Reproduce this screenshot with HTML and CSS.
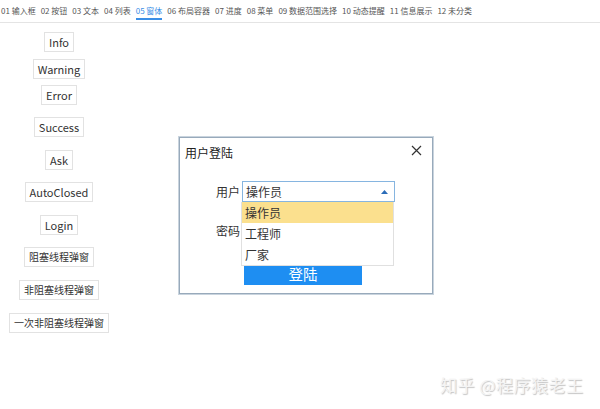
FILE: index.html
```html
<!DOCTYPE html>
<html>
  <head>
    <title>窗体</title>
    <meta charset='utf-8'>
    <link rel="stylesheet" href="styles.css">
  </head>
  <body>
    <div class='tabs'>
      <span class='tab'>01 输入框</span>
      <span class='tab'>02 按钮</span>
      <span class='tab'>03 文本</span>
      <span class='tab'>04 列表</span>
      <span class='tab active'>05 窗体</span>
      <span class='tab'>06 布局容器</span>
      <span class='tab'>07 进度</span>
      <span class='tab'>08 菜单</span>
      <span class='tab'>09 数据范围选择</span>
      <span class='tab'>10 动态提醒</span>
      <span class='tab'>11 信息展示</span>
      <span class='tab'>12 未分类</span>
    </div>

    <div class='buttons'>
      <button class='btn'>Info</button>
      <button class='btn'>Warning</button>
      <button class='btn'>Error</button>
      <button class='btn wide'>Success</button>
      <button class='btn wide'>Ask</button>
      <button class='btn wide'>AutoClosed</button>
      <button class='btn wide'>Login</button>
      <button class='btn wide cjk'>阻塞线程弹窗</button>
      <button class='btn wide cjk'>非阻塞线程弹窗</button>
      <button class='btn wide cjk'>一次非阻塞线程弹窗</button>
    </div>

    <!-- login window -->
    <div class='dialog'>
      <div class='dialog-title'>
        <span>用户登陆</span>
        <svg class='close' width='11' height='11' viewBox='0 0 11 11'>
          <path d='M1 1 L10 10 M10 1 L1 10' stroke='#333' stroke-width='1.2' fill='none'/>
        </svg>
      </div>
      <div class='form'>
        <div class='row'>
          <span class='label'>用户</span>
          <div class='combo'>
            <span>操作员</span>
            <svg width='7' height='4' viewBox='0 0 7 4'><path d='M0 4 L3.5 0 L7 4 Z' fill='#2b6cb8'/></svg>
          </div>
        </div>
        <div class='row'>
          <span class='label'>密码</span>
        </div>
        <button class='login'>登陆</button>
        <ul class='dropdown'>
          <li class='selected'>操作员</li>
          <li>工程师</li>
          <li>厂家</li>
        </ul>
      </div>
    </div>

    <div class='watermark'>知乎 @程序猿老王</div>
  </body>
</html>
```

FILE: styles.css
```css
body {
  margin: 0;
  background: #fff;
  font-family: 'Noto Sans CJK SC', 'Noto Sans', sans-serif;
  color: #333;
  width: 600px;
  height: 409px;
  position: relative;
  overflow: hidden;
}

/* tab strip */
.tabs {
  display: flex;
  padding: 3px 0 0 1px;
  height: 19px;
  border-bottom: 1px solid #e4e4e4;
  font-size: 8px;
  color: #555;
}
.tab {
  margin-right: 5px;
  line-height: 15px;
  white-space: nowrap;
}
.tab.active {
  color: #3a8ee6;
  border-bottom: 2px solid #3a8ee6;
  height: 15px;
}

/* left column of buttons */
.buttons {
  width: 118px;
  display: flex;
  flex-direction: column;
  align-items: center;
  padding-top: 9px;
}
.btn {
  font-family: inherit;
  font-size: 11px;
  color: #333;
  background: #fff;
  border: 1px solid #e2e2e2;
  height: 20px;
  padding: 0 4px;
  margin-bottom: 6.5px;
  line-height: 18px;
}
.btn.wide {
  margin-bottom: 12.6px;
}
.btn:nth-child(3) {
  margin-bottom: 12px;
}
.btn.cjk {
  font-size: 10px;
}

/* dialog */
.dialog {
  position: absolute;
  left: 179px;
  top: 137px;
  width: 252px;
  height: 155px;
  border: 1px solid #98aabb;
  background: #fff;
  box-shadow: 0 0 0 1px #c9d4de;
}
.dialog-title {
  display: flex;
  justify-content: space-between;
  align-items: center;
  padding: 6px 10px 0 5px;
  font-size: 12px;
  color: #222;
}
.close {
  margin-top: -4px;
}
.form {
  position: relative;
  padding: 20px 0 0 36px;
}
.row {
  display: flex;
  align-items: center;
  height: 21px;
  margin-bottom: 18px;
  font-size: 12px;
}
.label {
  width: 26px;
  color: #333;
}
.combo {
  width: 142px;
  height: 19px;
  border: 1px solid #86b5e0;
  display: flex;
  align-items: center;
  justify-content: space-between;
  padding: 0 6px 0 3px;
}
.login {
  display: block;
  margin: 22px 0 0 28px;
  width: 118px;
  height: 22px;
  border: none;
  background: #1e8ef2;
  color: #fff;
  font-family: inherit;
  font-size: 14.5px;
  line-height: 22px;
  padding: 0;
}
.dropdown {
  position: absolute;
  left: 61px;
  top: 41px;
  width: 151px;
  margin: 0;
  padding: 0;
  list-style: none;
  background: #fff;
  border: 1px solid #e0e0e0;
  border-top: none;
  font-size: 12px;
}
.dropdown li {
  height: 21px;
  line-height: 21px;
  padding-left: 3px;
}
.dropdown li.selected {
  background: #fbe08e;
}

.watermark {
  position: absolute;
  left: 440px;
  top: 372px;
  font-size: 17px;
  color: #f4f4f4;
  letter-spacing: 0.5px;
  text-shadow: 1px 1px 1px #c4c4c4;
}
```
